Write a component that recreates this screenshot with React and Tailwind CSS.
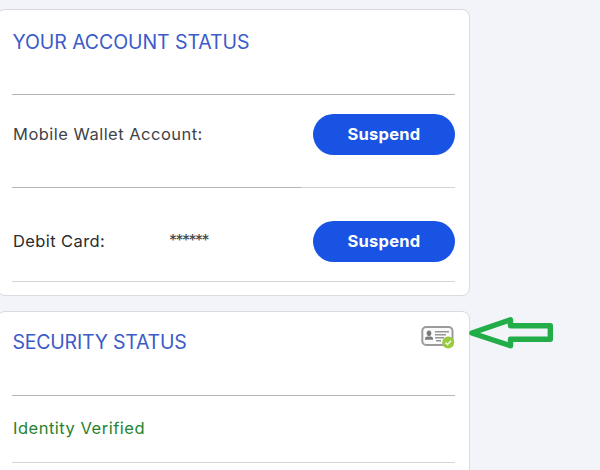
function Heading({ children, className }) {
  return (
    <h2 className={`ml-[0.5px] whitespace-nowrap text-[19.5px] leading-[26px] text-[#3b5bc9] ${className}`}>
      {children}
    </h2>
  );
}

function SuspendButton() {
  return (
    <button className="ml-auto flex h-[41px] w-[142px] items-center justify-center rounded-full bg-[#1853e3] text-[16.5px] leading-none font-bold tracking-[0.25px] text-white">
      Suspend
    </button>
  );
}

function IdCardIcon() {
  return (
    <svg className="mt-[12px] -mr-px ml-auto h-[24px] w-[36px]" viewBox="0 0 36 24" fill="none">
      <rect x="2.3" y="2" width="30.2" height="18" rx="4" fill="#fbfbfb" stroke="#9b9b9b" strokeWidth="2" />
      <ellipse cx="9" cy="8.3" rx="2.3" ry="2.8" fill="#7b7b7b" />
      <path d="M5 14.7v-1.5q0-1.3 2.5-1.7h3q2.5.4 2.5 1.7v1.5z" fill="#7b7b7b" />
      <path d="M15 6.8h14M15 9.8h11M15 12.8h9M16 15.8h5" stroke="#969696" strokeWidth="1.5" />
      <circle cx="28.2" cy="17.5" r="6" fill="#98cb3e" />
      <path d="m25.5 17.6 2 1.9 3.5-3.8" stroke="#f4faea" strokeWidth="1.5" />
    </svg>
  );
}

function Arrow() {
  return (
    <svg className="-ml-[3px] mt-[315px] h-[36px] w-[87px] shrink-0" viewBox="-2 0 87 36" fill="none">
      <path
        d="M2.8 18 41.5 4.8v6H81.3v13.4H41.5v6.6z"
        stroke="#22ad49"
        strokeWidth="5.4"
        strokeLinejoin="round"
      />
    </svg>
  );
}

export default function App() {
  return (
    <div className="flex h-[470px] w-[600px] overflow-hidden bg-[#f3f4fa] font-['Inter','Liberation_Sans',sans-serif] text-[16.5px] leading-[24px] text-[#414446]">
      <main className="-ml-[3px] w-[473px] shrink-0 pt-[9px]">
        <section className="h-[287px] rounded-lg border border-[#d9dbe0] bg-white pr-[14px] pl-[14px]">
          <div className="flex h-[84px] pt-[19px]">
            <Heading className="tracking-[-0.08px]">YOUR ACCOUNT STATUS</Heading>
          </div>
          <div className="h-px bg-[#b5b5b5]" />
          <div className="flex h-[92px] items-center pb-[13px]">
            <span className="ml-px pb-[2px] whitespace-nowrap tracking-[0.48px]">Mobile Wallet Account:</span>
            <SuspendButton />
          </div>
          <div className="flex h-px bg-[#d5d5d5]">
            <div className="w-[290px] bg-[#b5b5b5]" />
          </div>
          <div className="flex h-[93px] items-center pt-[14px]">
            <span className="ml-px w-[156px] pb-[2px] whitespace-nowrap tracking-[0.4px] text-[#292c2e]">Debit Card:</span>
            <span className="pb-[3px] text-[16px] tracking-[-1.5px]">******</span>
            <SuspendButton />
          </div>
          <div className="h-px bg-[#d5d5d5]" />
        </section>
        <section className="mt-[15px] h-[300px] rounded-lg border border-[#d9dbe0] bg-white pr-[14px] pl-[14px]">
          <div className="flex h-[83px] pt-px">
            <Heading className="mt-[16px] tracking-[-0.22px]">SECURITY STATUS</Heading>
            <IdCardIcon />
          </div>
          <div className="h-px bg-[#b5b5b5]" />
          <div className="flex h-[66px] items-center text-[#26822d]">
            <span className="ml-px pb-[2px] whitespace-nowrap tracking-[0.51px]">Identity Verified</span>
          </div>
          <div className="h-px bg-[#d5d5d5]" />
        </section>
      </main>
      <Arrow />
    </div>
  );
}
